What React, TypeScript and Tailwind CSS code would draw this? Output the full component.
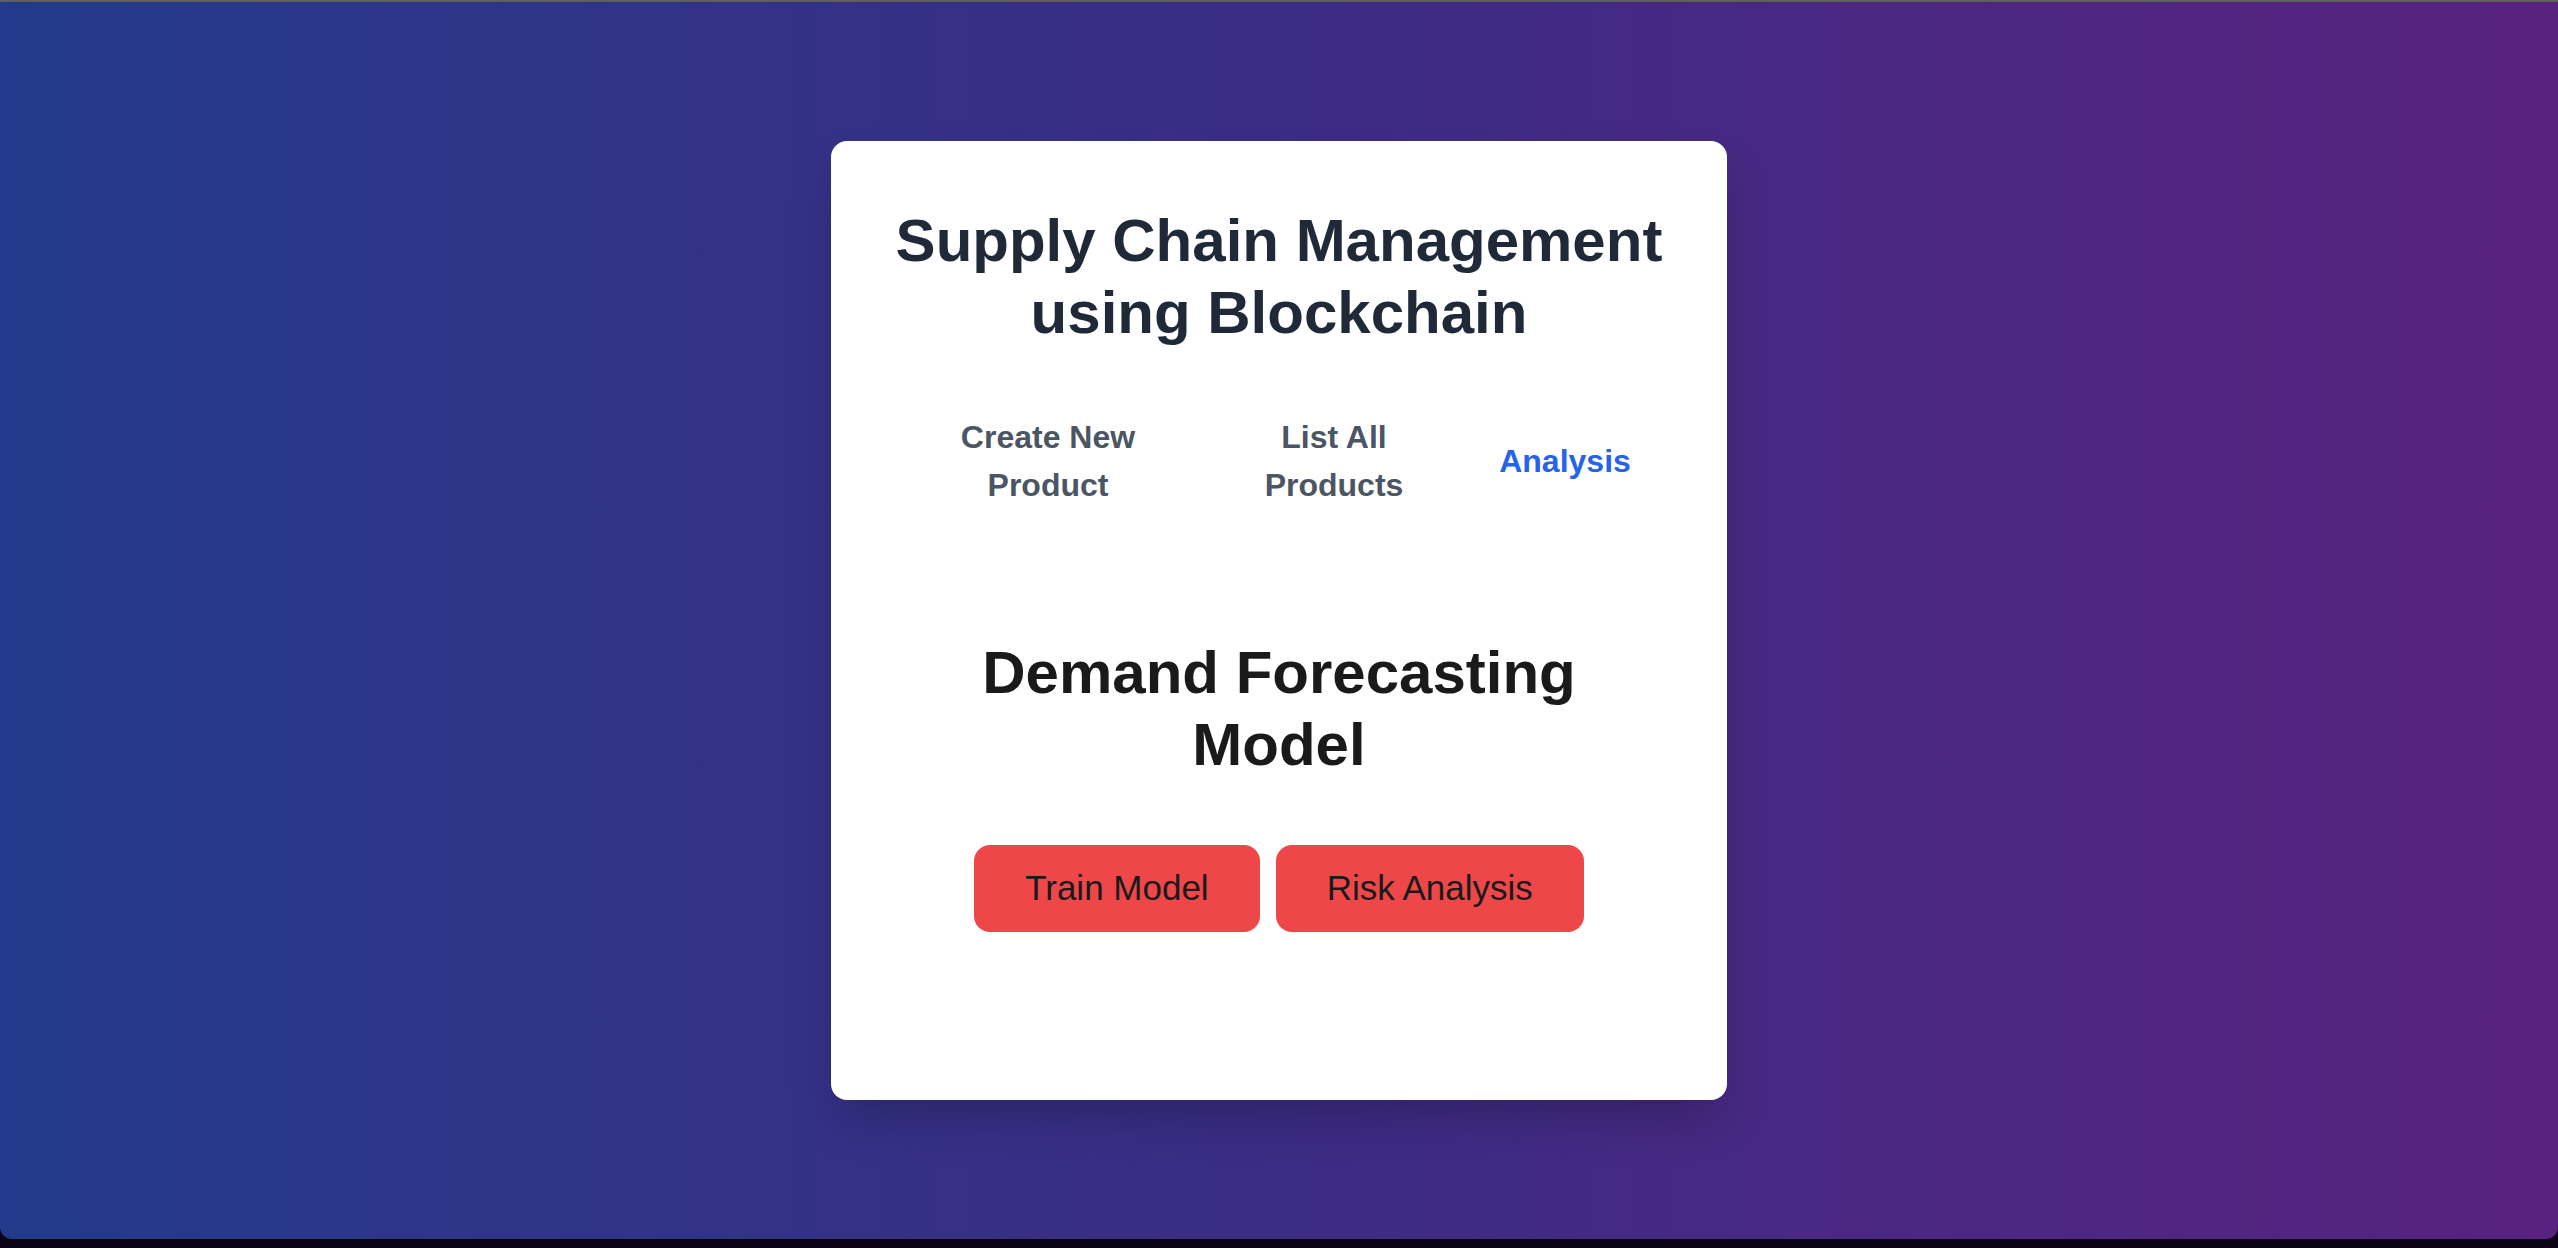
import { useState } from 'react'

const tabs = [
  { id: 'create', label: 'Create New Product', w: 'w-[306px]' },
  { id: 'list', label: 'List All Products', w: 'w-[266px]' },
  { id: 'analysis', label: 'Analysis', w: 'w-[196px]' },
]

export default function App() {
  const [active, setActive] = useState('analysis')

  return (
    <div
      className="flex flex-col h-[1248px] w-full bg-[#0b0414] overflow-hidden"
      style={{ fontFamily: '"Liberation Sans", Arial, sans-serif' }}
    >
      <div className="h-[2px] bg-[#5f5f5f]" />
      <main className="flex-1 flex items-center justify-center rounded-b-[12px] bg-gradient-to-r from-[#223a8b] via-[#3b2c85] to-[#58217f]">
        <div className="w-[896px] bg-white rounded-2xl shadow-2xl px-16 pt-16 pb-[168px] flex flex-col items-center">
          <h1 className="text-[60px] leading-[72px] font-bold text-[#1f2937] text-center">
            Supply Chain Management using Blockchain
          </h1>

          <nav className="mt-12 flex w-full items-center">
            {tabs.map(t => (
              <button
                key={t.id}
                onClick={() => setActive(t.id)}
                className={`${t.w} px-8 py-4 text-[32px] leading-[48px] font-bold text-center ${
                  active === t.id ? 'text-[#2563eb]' : 'text-[#4b5563]'
                }`}
              >
                {t.label}
              </button>
            ))}
          </nav>

          <section className="mt-[112px] flex flex-col items-center">
            <h2 className="text-[60px] leading-[72px] font-bold text-[#1a1a1a] text-center">
              Demand Forecasting Model
            </h2>
            <div className="mt-16 flex gap-4">
              <button className="h-[87px] px-[51px] rounded-2xl bg-[#ee474a] text-[35px] text-[#1a1a1a]">
                Train Model
              </button>
              <button className="h-[87px] px-[51px] rounded-2xl bg-[#ee474a] text-[35px] text-[#1a1a1a]">
                Risk Analysis
              </button>
            </div>
          </section>
        </div>
      </main>
      <div className="h-[9px] bg-[#0b0414]" />
    </div>
  )
}
